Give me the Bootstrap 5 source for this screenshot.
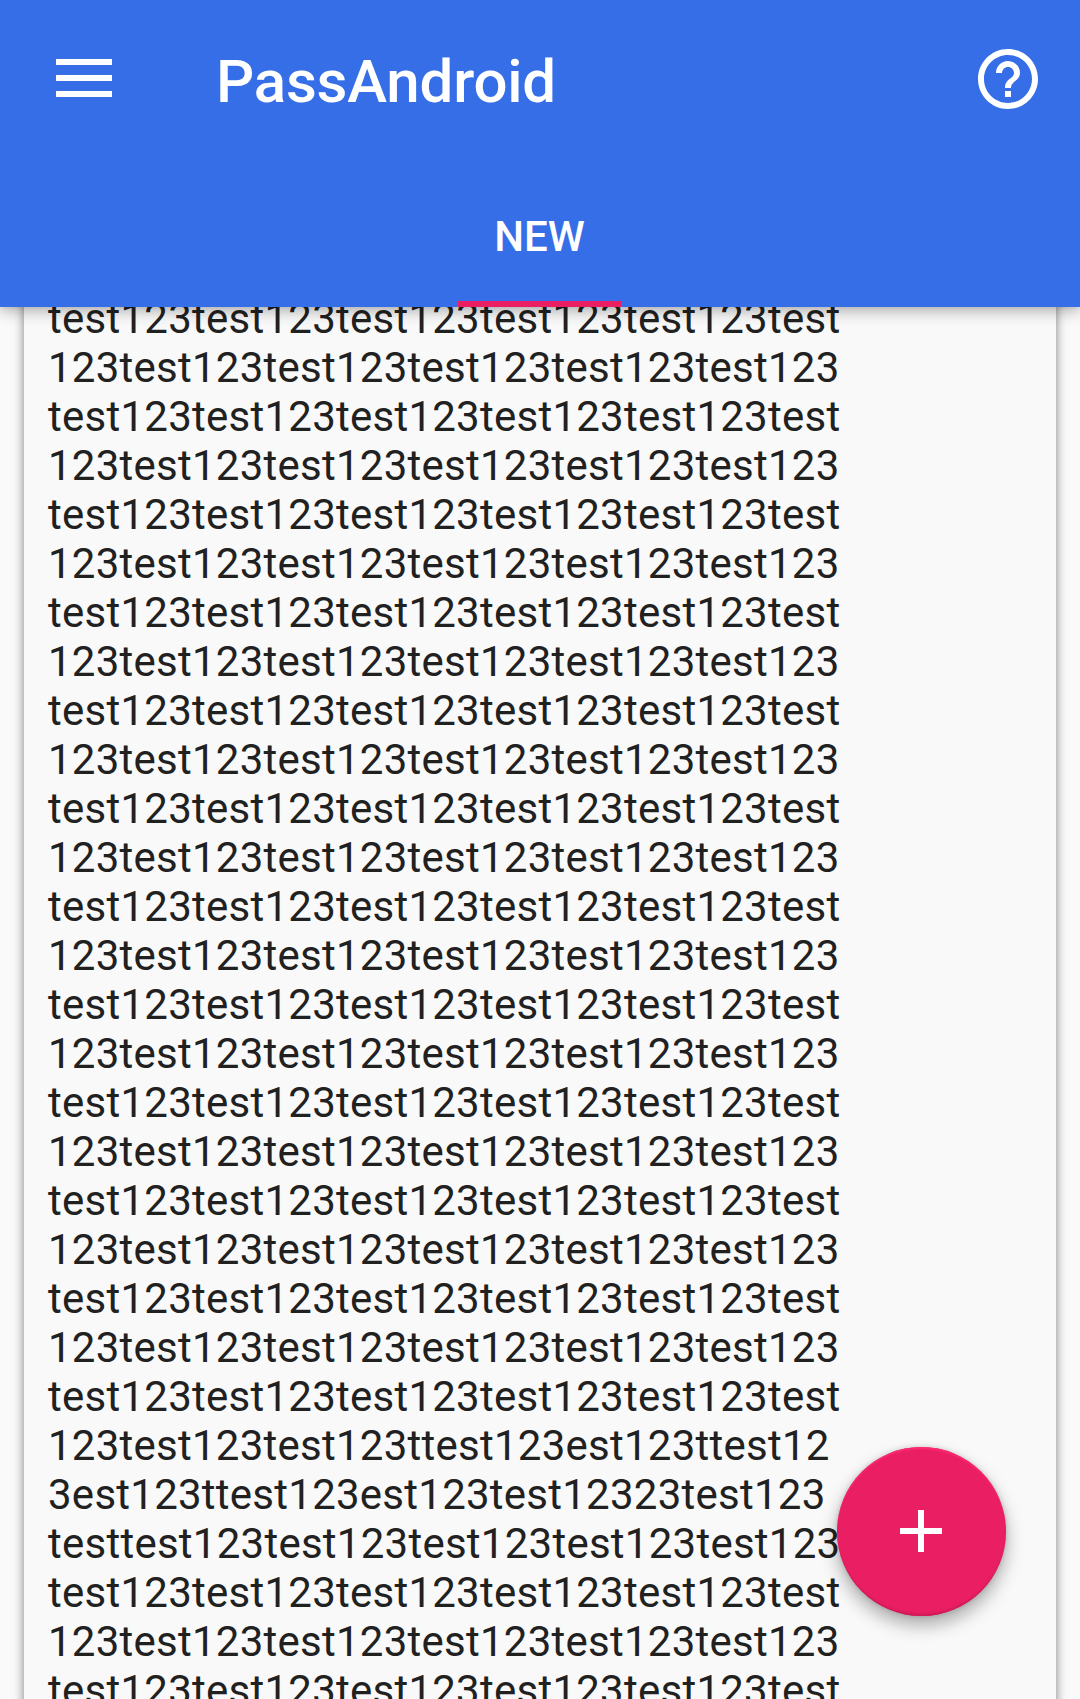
<!DOCTYPE html>
<html lang="en">
<head>
<meta charset="utf-8">
<meta name="viewport" content="width=device-width, initial-scale=1">
<title>PassAndroid</title>
<link href="https://cdn.jsdelivr.net/npm/bootstrap@5.3.0/dist/css/bootstrap.min.css" rel="stylesheet">
<style>
body{font-family:Roboto,"Liberation Sans",sans-serif;background:#fafafa;color:#212121}
.app-bar{height:307px;background:#366ee7;box-shadow:0 4px 14px rgba(0,0,0,.3),0 0 4px rgba(0,0,0,.08);z-index:2}
.tool-row{height:157px;padding:0 36px 0 56px}
.tool-row .menu-btn{width:56px;height:38px;margin-bottom:2px}
.app-title{font-size:60px;line-height:70px;font-weight:500;margin-left:104px;padding-top:6px;letter-spacing:-.2px}
.tab-new{width:163px;height:150px;font-size:42px;line-height:49px;font-weight:500;border-bottom:6px solid #e91e63;padding-top:55px;margin-left:-1px}
.pass-card{margin:-13px 24px 0;padding:0 24px;background:#f9f9f9;box-shadow:0 2px 10px rgba(0,0,0,.5);border-radius:0;height:1500px}
.pass-line{font-size:42px;line-height:49px;letter-spacing:.25px;white-space:nowrap}
.fab-add{right:74.5px;bottom:83.5px;width:169px;height:169px;background:#e91e63;box-shadow:0 9px 18px rgba(0,0,0,.32),0 0 5px rgba(0,0,0,.15),inset 0 3px 2px -1px #ff2a72,inset 0 -3px 2px -1px #cf1b58;z-index:3}
</style>
<script src="https://cdn.jsdelivr.net/npm/bootstrap@5.3.0/dist/js/bootstrap.bundle.min.js"></script>
</head>
<body class="vh-100 overflow-hidden d-flex flex-column position-relative">
<header class="app-bar position-relative flex-shrink-0 text-white">
  <div class="tool-row d-flex align-items-center">
    <button class="menu-btn btn p-0 border-0 rounded-0 d-flex" aria-label="Menu"><svg width="56" height="38" fill="#fff"><path d="M0 0h56v6H0zM0 16h56v6H0zM0 32h56v6H0z"/></svg></button>
    <h1 class="app-title mb-0">PassAndroid</h1>
    <button class="btn p-0 border-0 ms-auto d-flex" aria-label="Help"><svg width="72" height="72" viewBox="0 0 24 24" fill="#fff"><path d="M11 18h2v-2h-2v2zm1-16C6.480 2 2 6.480 2 12s4.480 10 10 10 10-4.480 10-10S17.520 2 12 2zm0 18c-4.410 0-8-3.590-8-8s3.590-8 8-8 8 3.590 8 8-3.590 8-8 8zm0-14c-2.210 0-4 1.790-4 4h2c0-1.100.9-2 2-2s2 .9 2 2c0 2-3 1.750-3 5h2c0-2.250 3-2.500 3-5 0-2.210-1.790-4-4-4z"/></svg></button>
  </div>
  <nav class="d-flex justify-content-center"><div class="tab-new text-center">NEW</div></nav>
</header>
<main class="flex-grow-1 overflow-hidden">
  <div class="pass-card card border-0">
    <div class="pass-line">test123test123test123test123test123test</div>
    <div class="pass-line">123test123test123test123test123test123</div>
    <div class="pass-line">test123test123test123test123test123test</div>
    <div class="pass-line">123test123test123test123test123test123</div>
    <div class="pass-line">test123test123test123test123test123test</div>
    <div class="pass-line">123test123test123test123test123test123</div>
    <div class="pass-line">test123test123test123test123test123test</div>
    <div class="pass-line">123test123test123test123test123test123</div>
    <div class="pass-line">test123test123test123test123test123test</div>
    <div class="pass-line">123test123test123test123test123test123</div>
    <div class="pass-line">test123test123test123test123test123test</div>
    <div class="pass-line">123test123test123test123test123test123</div>
    <div class="pass-line">test123test123test123test123test123test</div>
    <div class="pass-line">123test123test123test123test123test123</div>
    <div class="pass-line">test123test123test123test123test123test</div>
    <div class="pass-line">123test123test123test123test123test123</div>
    <div class="pass-line">test123test123test123test123test123test</div>
    <div class="pass-line">123test123test123test123test123test123</div>
    <div class="pass-line">test123test123test123test123test123test</div>
    <div class="pass-line">123test123test123test123test123test123</div>
    <div class="pass-line">test123test123test123test123test123test</div>
    <div class="pass-line">123test123test123test123test123test123</div>
    <div class="pass-line">test123test123test123test123test123test</div>
    <div class="pass-line">123test123test123ttest123est123ttest12</div>
    <div class="pass-line">3est123ttest123est123test12323test123</div>
    <div class="pass-line">testtest123test123test123test123test123</div>
    <div class="pass-line">test123test123test123test123test123test</div>
    <div class="pass-line">123test123test123test123test123test123</div>
    <div class="pass-line">test123test123test123test123test123test</div>
  </div>
</main>
<button class="fab-add btn rounded-circle border-0 p-0 position-absolute d-flex align-items-center justify-content-center" aria-label="Add"><svg width="42" height="42" fill="#fff"><path d="M18 0h6v18h18v6H24v18h-6V24H0v-6h18z"/></svg></button>
</body>
</html>
